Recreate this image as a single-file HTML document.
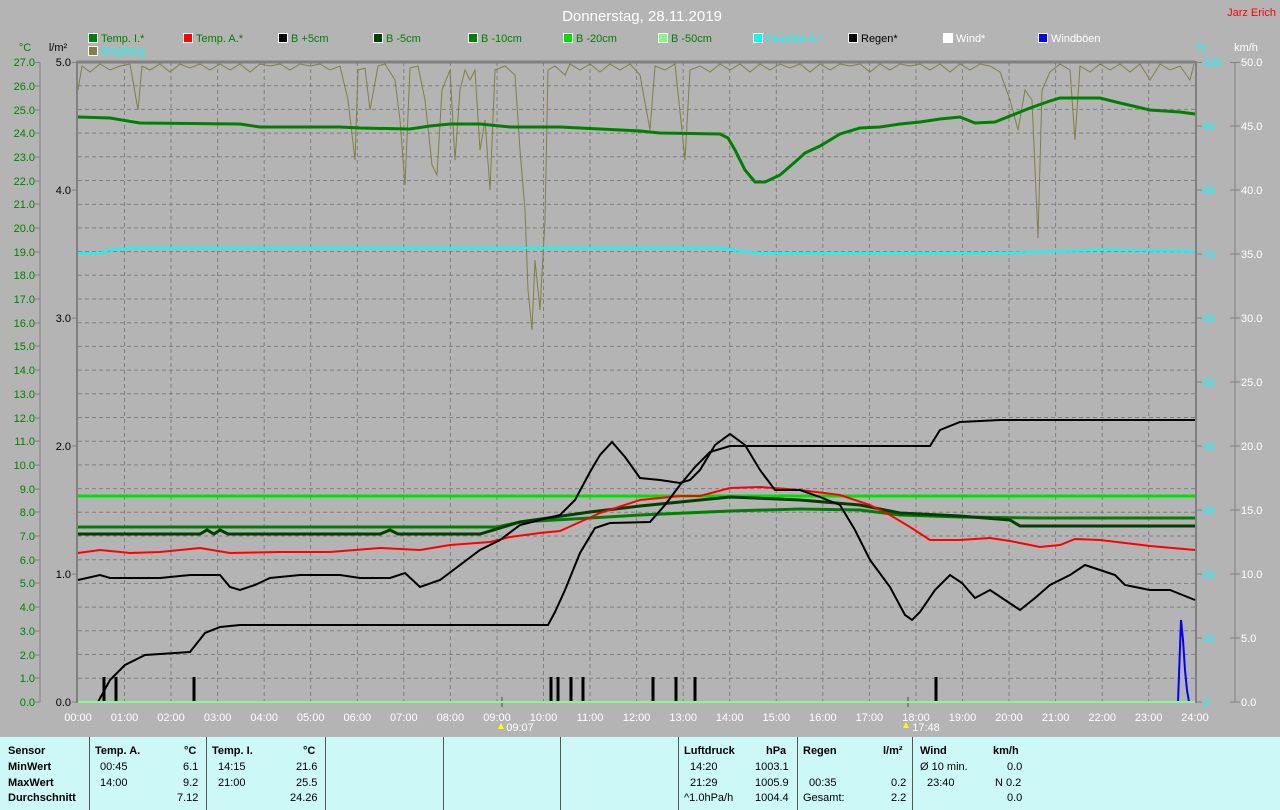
<!DOCTYPE html>
<html><head><meta charset="utf-8"><style>
body{margin:0;width:1280px;height:810px;overflow:hidden;background:#b4b4b4;font-family:"Liberation Sans",sans-serif;}
.tbl{position:absolute;left:0;top:737px;width:1280px;height:73px;background:#ccf8f8;font-size:11px;}
.tbl div{position:absolute;}
.b{font-weight:bold}
.vl{top:0;height:73px;width:1px;background:#555}
</style></head><body>
<svg width="1280" height="737" style="position:absolute;left:0;top:0" font-family="Liberation Sans, sans-serif" font-size="11">
<text x="642" y="21" fill="#fff" font-size="15" text-anchor="middle">Donnerstag, 28.11.2019</text>
<text x="1276" y="16" fill="#f00" font-size="11" text-anchor="end">Jarz Erich</text>
<g stroke="#fff" stroke-width="1">
<rect x="88.5" y="33.5" width="9" height="9" fill="#008000"/>
<rect x="183.5" y="33.5" width="9" height="9" fill="#f00"/>
<rect x="278.5" y="33.5" width="9" height="9" fill="#000"/>
<rect x="373.5" y="33.5" width="9" height="9" fill="#004000"/>
<rect x="468.5" y="33.5" width="9" height="9" fill="#008000"/>
<rect x="563.5" y="33.5" width="9" height="9" fill="#00e000"/>
<rect x="658.5" y="33.5" width="9" height="9" fill="#80ff80"/>
<rect x="753.5" y="33.5" width="9" height="9" fill="#0ff"/>
<rect x="848.5" y="33.5" width="9" height="9" fill="#000"/>
<rect x="943.5" y="33.5" width="9" height="9" fill="#fff"/>
<rect x="1038.5" y="33.5" width="9" height="9" fill="#00f"/>
<rect x="88.5" y="46.5" width="9" height="9" fill="#808040"/>
</g>
<g font-size="11">
<text x="101" y="42" fill="#008000">Temp. I.*</text>
<text x="196" y="42" fill="#008000">Temp. A.*</text>
<text x="291" y="42" fill="#008000">B +5cm</text>
<text x="386" y="42" fill="#008000">B -5cm</text>
<text x="481" y="42" fill="#008000">B -10cm</text>
<text x="576" y="42" fill="#008000">B -20cm</text>
<text x="671" y="42" fill="#008000">B -50cm</text>
<text x="766" y="42" fill="#0ff">Feuchte A.*</text>
<text x="861" y="42" fill="#000">Regen*</text>
<text x="956" y="42" fill="#fff">Wind*</text>
<text x="1051" y="42" fill="#fff">Windböen</text>
<text x="101" y="55" fill="#0ff">Empfang</text>
<text x="25" y="51" fill="#008000" text-anchor="middle">°C</text>
<text x="58" y="51" fill="#000" text-anchor="middle">l/m²</text>
<text x="1201" y="51" fill="#0ff" text-anchor="middle">%</text>
<text x="1246" y="51" fill="#fff" text-anchor="middle">km/h</text>
</g>
<g stroke="#808080" stroke-dasharray="4,3" stroke-width="1">
<path d="M78 85.7H1195M78 109.4H1195M78 133.1H1195M78 156.8H1195M78 180.5H1195M78 204.2H1195M78 227.9H1195M78 251.6H1195M78 275.3H1195M78 299H1195M78 322.7H1195M78 346.4H1195M78 370.1H1195M78 393.8H1195M78 417.5H1195M78 441.2H1195M78 464.9H1195M78 488.6H1195M78 512.3H1195M78 536H1195M78 559.7H1195M78 583.4H1195M78 607.1H1195M78 630.8H1195M78 654.5H1195M78 678.2H1195"/>
<path d="M124.5 62V702M171 62V702M217.6 62V702M264.2 62V702M310.7 62V702M357.3 62V702M403.8 62V702M450.4 62V702M497 62V702M543.5 62V702M590 62V702M636.6 62V702M683.2 62V702M729.7 62V702M776.3 62V702M822.8 62V702M869.4 62V702M916 62V702M962.5 62V702M1009 62V702M1055.6 62V702M1102.2 62V702M1148.7 62V702"/>
</g>
<path d="M77 62H1195" stroke="#808080" stroke-width="3"/>
<path d="M77 61V703M1196 61V703" stroke="#808080" stroke-width="2"/>
<path d="M40 62V702M1235 62V702" stroke="#808080" stroke-width="1"/>
<g stroke="#808080">
<path d="M35 62.5H40M35 86H40M35 110H40M35 133H40M35 157H40M35 181H40M35 204H40M35 228H40M35 252H40M35 275H40M35 299H40M35 323H40M35 346H40M35 370H40M35 394H40M35 418H40M35 441H40M35 465H40M35 489H40M35 512H40M35 536H40M35 560H40M35 583H40M35 607H40M35 631H40M35 655H40M35 678H40M35 702H40"/>
<path d="M72 62.5H77M72 190H77M72 318H77M72 446H77M72 574H77M72 702H77"/>
<path d="M1197 62.5H1202M1197 126H1202M1197 190H1202M1197 254H1202M1197 318H1202M1197 382H1202M1197 446H1202M1197 510H1202M1197 574H1202M1197 638H1202M1197 702H1202"/>
<path d="M1230 62.5H1240M1230 126H1240M1230 190H1240M1230 254H1240M1230 318H1240M1230 382H1240M1230 446H1240M1230 510H1240M1230 574H1240M1230 638H1240M1230 702H1240"/>
</g>
<g fill="#008000" text-anchor="end">
<text x="35" y="66">27.0</text><text x="35" y="90">26.0</text><text x="35" y="114">25.0</text><text x="35" y="137">24.0</text><text x="35" y="161">23.0</text><text x="35" y="185">22.0</text><text x="35" y="208">21.0</text><text x="35" y="232">20.0</text><text x="35" y="256">19.0</text><text x="35" y="279">18.0</text><text x="35" y="303">17.0</text><text x="35" y="327">16.0</text><text x="35" y="350">15.0</text><text x="35" y="374">14.0</text><text x="35" y="398">13.0</text><text x="35" y="422">12.0</text><text x="35" y="445">11.0</text><text x="35" y="469">10.0</text><text x="35" y="493">9.0</text><text x="35" y="516">8.0</text><text x="35" y="540">7.0</text><text x="35" y="564">6.0</text><text x="35" y="587">5.0</text><text x="35" y="611">4.0</text><text x="35" y="635">3.0</text><text x="35" y="659">2.0</text><text x="35" y="682">1.0</text><text x="35" y="706">0.0</text>
</g>
<g fill="#000" text-anchor="end">
<text x="71" y="66">5.0</text><text x="71" y="194">4.0</text><text x="71" y="322">3.0</text><text x="71" y="450">2.0</text><text x="71" y="578">1.0</text><text x="71" y="706">0.0</text>
</g>
<g fill="#0ff">
<text x="1203" y="66">100</text><text x="1203" y="130">90</text><text x="1203" y="194">80</text><text x="1203" y="258">70</text><text x="1203" y="322">60</text><text x="1203" y="386">50</text><text x="1203" y="450">40</text><text x="1203" y="514">30</text><text x="1203" y="578">20</text><text x="1203" y="642">10</text><text x="1203" y="706">0</text>
</g>
<g fill="#fff">
<text x="1241" y="66">50.0</text><text x="1241" y="130">45.0</text><text x="1241" y="194">40.0</text><text x="1241" y="258">35.0</text><text x="1241" y="322">30.0</text><text x="1241" y="386">25.0</text><text x="1241" y="450">20.0</text><text x="1241" y="514">15.0</text><text x="1241" y="578">10.0</text><text x="1241" y="642">5.0</text><text x="1241" y="706">0.0</text>
</g>
<g fill="#fff" text-anchor="middle">
<text x="78" y="721">00:00</text><text x="124.5" y="721">01:00</text><text x="171" y="721">02:00</text><text x="217.6" y="721">03:00</text><text x="264.2" y="721">04:00</text><text x="310.7" y="721">05:00</text><text x="357.3" y="721">06:00</text><text x="403.8" y="721">07:00</text><text x="450.4" y="721">08:00</text><text x="497" y="721">09:00</text><text x="543.5" y="721">10:00</text><text x="590" y="721">11:00</text><text x="636.6" y="721">12:00</text><text x="683.2" y="721">13:00</text><text x="729.7" y="721">14:00</text><text x="776.3" y="721">15:00</text><text x="822.8" y="721">16:00</text><text x="869.4" y="721">17:00</text><text x="916" y="721">18:00</text><text x="962.5" y="721">19:00</text><text x="1009" y="721">20:00</text><text x="1055.6" y="721">21:00</text><text x="1102.2" y="721">22:00</text><text x="1148.7" y="721">23:00</text><text x="1195" y="721">24:00</text>
<text x="520" y="731">09:07</text><text x="926" y="731">17:48</text>
</g>
<path d="M502 697V707M908 697V707" stroke="#808080" stroke-width="2"/>
<path d="M501 723l3 6h-6z" fill="#ff0"/><path d="M906 722l3 6h-6z" fill="#ff0"/>
<polyline fill="none" stroke="#808040" stroke-width="1" points="78,90 82,66 90,72 100,64 110,70 120,66 130,64 138,110 142,66 150,70 160,64 170,72 180,64 190,68 200,64 210,70 220,64 230,70 240,64 250,72 260,64 270,66 280,64 290,70 300,64 310,66 320,64 330,70 340,66 348,100 355,160 358,70 365,68 370,110 378,66 385,64 395,80 400,120 405,185 410,68 418,66 425,100 432,165 437,175 442,90 450,70 455,160 460,90 465,70 470,80 475,70 480,150 485,120 490,190 495,70 505,66 515,75 520,150 525,210 528,290 532,330 535,260 540,310 545,220 548,70 555,66 565,75 570,64 580,70 590,64 600,72 610,64 620,70 630,64 640,75 650,130 655,66 665,70 675,64 685,160 690,70 700,66 710,72 720,64 730,70 740,64 750,72 760,64 770,70 780,64 790,68 800,64 810,72 820,64 830,70 840,64 850,66 860,64 870,72 880,64 890,70 900,64 910,66 920,64 930,70 940,64 950,72 960,64 970,70 980,64 990,66 1000,72 1010,100 1018,130 1025,90 1032,100 1038,238 1042,90 1050,72 1060,64 1070,70 1075,140 1080,66 1090,72 1100,64 1110,70 1120,64 1130,72 1140,64 1150,80 1160,64 1170,70 1180,66 1190,80 1194,64"/>
<!-- Temp I -->
<polyline fill="none" stroke="#008000" stroke-width="3" points="78,117 110,118 140,123 240,124 260,127 340,127 360,128 410,129 430,126 450,124 480,124 500,126 510,127 560,127 600,129 640,131 660,133 720,134 728,138 735,150 745,170 755,182 765,182 780,175 795,162 805,153 820,146 840,134 860,128 880,127 900,124 920,122 940,119 960,117 975,123 995,122 1010,116 1030,108 1050,101 1060,98 1100,98 1120,103 1150,110 1180,112 1195,114"/>
<polyline fill="none" stroke="#0ff" stroke-width="2" points="78,253 100,253 110,250 130,248 720,248 740,251 760,253 1000,253 1100,250 1195,251"/>
<path d="M78 496H1195" stroke="#00e000" stroke-width="3"/>
<polyline fill="none" stroke="#008000" stroke-width="3" points="78,527 497,527 520,522 590,518 640,515 730,511 800,509 860,510 900,515 960,517 1040,518 1195,518"/>
<polyline fill="none" stroke="#004000" stroke-width="3" points="78,534 200,534 207,530 214,534 220,530 228,534 380,534 390,530 398,534 480,534 520,522 590,512 640,506 730,497 800,500 860,505 900,513 960,516 1010,520 1020,526 1195,526"/>
<polyline fill="none" stroke="#f00" stroke-width="2" points="78,553 100,550 130,553 160,552 200,548 230,553 280,552 330,552 380,548 420,550 450,545 490,542 510,537 540,533 560,531 580,522 600,513 640,500 680,496 700,496 730,488 760,487 800,490 840,495 870,505 890,515 910,527 930,540 960,540 990,538 1010,541 1040,547 1060,545 1075,539 1100,540 1150,546 1195,550"/>
<polyline fill="none" stroke="#000" stroke-width="2" points="78,580 100,575 110,578 160,578 190,575 220,575 230,587 240,590 255,585 270,578 300,575 340,575 360,578 390,578 405,573 420,587 440,580 460,565 480,550 500,540 520,525 540,520 560,515 575,500 590,472 600,455 612,442 625,457 640,478 660,480 680,483 690,480 700,470 715,445 730,434 745,445 760,470 775,490 800,490 820,497 840,505 855,530 870,560 890,587 905,615 912,620 920,612 935,590 950,575 962,583 975,598 990,590 1005,600 1020,610 1035,598 1050,585 1070,575 1085,565 1100,570 1115,575 1125,585 1150,590 1170,590 1185,596 1195,600"/>
<polyline fill="none" stroke="#000" stroke-width="2" points="98,702 110,680 125,665 145,655 190,652 205,633 220,627 240,625 548,625 555,612 565,590 580,553 595,528 610,523 650,522 665,505 680,485 695,467 710,452 730,446 930,446 940,430 960,422 1000,420 1195,420"/>
<path d="M104 677V702M116 677V702M194 677V702M551 677V702M558 677V702M571 677V702M583 677V702M653 677V702M676 677V702M695 677V702M936 677V702" stroke="#000" stroke-width="3"/>
<polyline fill="none" stroke="#00f" stroke-width="2" points="1178,702 1179,675 1181,620 1183,640 1185,670 1187,690 1189,702"/>
<path d="M78 702H1195" stroke="#80ff80" stroke-width="2"/>
</svg>
<div class="tbl">
<div class="vl" style="left:89px"></div><div class="vl" style="left:206px"></div><div class="vl" style="left:325px"></div><div class="vl" style="left:443px"></div><div class="vl" style="left:560px"></div><div class="vl" style="left:678px"></div><div class="vl" style="left:797px"></div><div class="vl" style="left:912px"></div>
<div class="b" style="left:8px;top:8px">Sensor</div><div class="b" style="left:8px;top:24px">MinWert</div><div class="b" style="left:8px;top:40px">MaxWert</div><div class="b" style="left:8px;top:55px">Durchschnitt</div>
<div class="b" style="left:95px;top:8px">Temp. A.</div><div class="b" style="left:184px;top:8px">°C</div>
<div style="left:100px;top:24px">00:45</div><div style="left:183px;top:24px">6.1</div>
<div style="left:100px;top:40px">14:00</div><div style="left:183px;top:40px">9.2</div>
<div style="left:177px;top:55px">7.12</div>
<div class="b" style="left:212px;top:8px">Temp. I.</div><div class="b" style="left:303px;top:8px">°C</div>
<div style="left:218px;top:24px">14:15</div><div style="left:296px;top:24px">21.6</div>
<div style="left:218px;top:40px">21:00</div><div style="left:296px;top:40px">25.5</div>
<div style="left:290px;top:55px">24.26</div>
<div class="b" style="left:684px;top:8px">Luftdruck</div><div class="b" style="left:766px;top:8px">hPa</div>
<div style="left:690px;top:24px">14:20</div><div style="left:755px;top:24px">1003.1</div>
<div style="left:690px;top:40px">21:29</div><div style="left:755px;top:40px">1005.9</div>
<div style="left:684px;top:55px">^1.0hPa/h</div><div style="left:755px;top:55px">1004.4</div>
<div class="b" style="left:803px;top:8px">Regen</div><div class="b" style="left:883px;top:8px">l/m²</div>
<div style="left:809px;top:40px">00:35</div><div style="left:891px;top:40px">0.2</div>
<div style="left:803px;top:55px">Gesamt:</div><div style="left:891px;top:55px">2.2</div>
<div class="b" style="left:920px;top:8px">Wind</div><div class="b" style="left:993px;top:8px">km/h</div>
<div style="left:920px;top:24px">Ø 10 min.</div><div style="left:1007px;top:24px">0.0</div>
<div style="left:927px;top:40px">23:40</div><div style="left:995px;top:40px">N 0.2</div>
<div style="left:1007px;top:55px">0.0</div>
</div>
</body></html>
